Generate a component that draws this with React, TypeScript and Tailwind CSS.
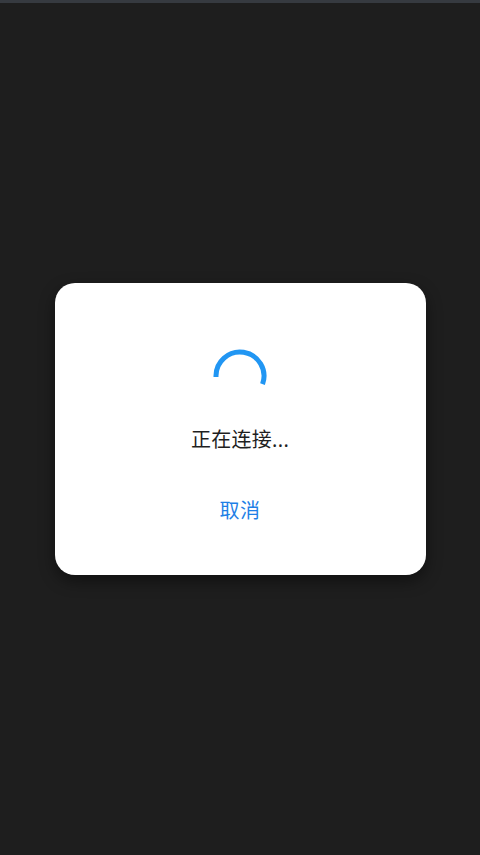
export default function App() {
  return (
    <div
      className="w-[480px] h-[855px] bg-[#1e1e1e] border-t-[3px] border-[#363a40] flex items-center justify-center"
      style={{ fontFamily: '"Noto Sans", "Noto Sans CJK SC", sans-serif' }}
    >
      {/* 连接中弹窗 */}
      <div className="w-[371px] h-[292px] bg-white rounded-[20px] shadow-[0_6px_16px_rgba(0,0,0,0.45)] flex flex-col items-center pt-[65px]">
        <svg width="56" height="56" viewBox="0 0 56 56">
          <path
            d="M4 29 A24 24 0 1 1 50.55 36.21"
            fill="none"
            stroke="#2196f3"
            strokeWidth="5"
          />
        </svg>
        <div className="mt-[22px] text-[20px] leading-[28px] tracking-[0.3px] text-[#1f1f1f]">
          正在连接...
        </div>
        <button className="mt-[43px] text-[20px] leading-[28px] tracking-[0.5px] text-[#1e7fe6]">
          取消
        </button>
      </div>
    </div>
  );
}
